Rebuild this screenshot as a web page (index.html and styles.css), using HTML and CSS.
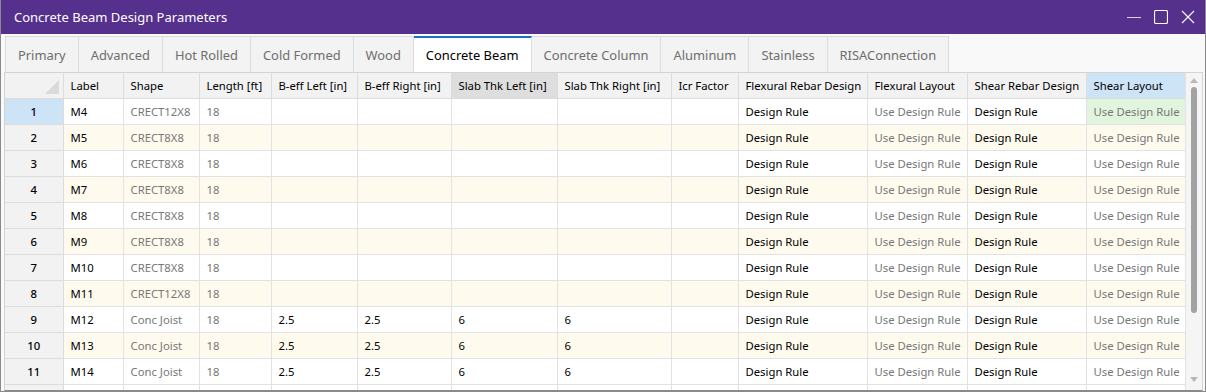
FILE: index.html
```html
<!DOCTYPE html>
<html lang="en">
<head>
    <meta charset="UTF-8">
    <title>Concrete Beam Design Parameters</title>
    <link rel="stylesheet" href="styles.css">
</head>
<body>
    <div class="window">
        <div class="titlebar">
            <span class="title">Concrete Beam Design Parameters</span>
            <div class="controls">
                <svg width="14" height="14" viewBox="0 0 14 14"><line x1="0" y1="7.5" x2="14" y2="7.5" stroke="#d9d2e6" stroke-width="1"/></svg>
                <svg width="14" height="14" viewBox="0 0 14 14"><rect x="0.5" y="0.5" width="13" height="13" rx="1.5" fill="none" stroke="#fff" stroke-width="1.2"/></svg>
                <svg width="14" height="14" viewBox="0 0 14 14"><path d="M1 1 L13 13 M13 1 L1 13" stroke="#fff" stroke-width="1.1"/></svg>
            </div>
        </div>

        <div class="tabs">
            <div class="tab">Primary</div>
            <div class="tab">Advanced</div>
            <div class="tab">Hot Rolled</div>
            <div class="tab">Cold Formed</div>
            <div class="tab">Wood</div>
            <div class="tab active">Concrete Beam</div>
            <div class="tab">Concrete Column</div>
            <div class="tab">Aluminum</div>
            <div class="tab">Stainless</div>
            <div class="tab">RISAConnection</div>
        </div>

        <div class="grid-area">
            <div class="grid-scroll">
                <table class="grid">
                    <colgroup>
                        <col style="width:58px"><col style="width:60px"><col style="width:76px"><col style="width:72px">
                        <col style="width:86px"><col style="width:94px"><col style="width:106px"><col style="width:114px">
                        <col style="width:67px"><col style="width:129px"><col style="width:100px"><col style="width:119px">
                        <col style="width:101px">
                    </colgroup>
                    <thead>
                        <tr>
                            <th class="corner"><span class="corner-mark"></span></th>
                            <th>Label</th>
                            <th>Shape</th>
                            <th>Length [ft]</th>
                            <th>B-eff Left [in]</th>
                            <th>B-eff Right [in]</th>
                            <th class="sorted">Slab Thk Left [in]</th>
                            <th>Slab Thk Right [in]</th>
                            <th>Icr Factor</th>
                            <th>Flexural Rebar Design</th>
                            <th>Flexural Layout</th>
                            <th>Shear Rebar Design</th>
                            <th class="current">Shear Layout</th>
                        </tr>
                    </thead>
                    <tbody id="rows"></tbody>
                </table>
            </div>
            <div class="scrollbar">
                <span class="arrow up"></span>
                <span class="thumb"></span>
                <span class="arrow down"></span>
            </div>
        </div>
    </div>

    <script>
        // member rows: label, shape, b-eff left, b-eff right, slab left, slab right
        const members = [
            ['M4', 'CRECT12X8', '', '', '', ''],
            ['M5', 'CRECT8X8', '', '', '', ''],
            ['M6', 'CRECT8X8', '', '', '', ''],
            ['M7', 'CRECT8X8', '', '', '', ''],
            ['M8', 'CRECT8X8', '', '', '', ''],
            ['M9', 'CRECT8X8', '', '', '', ''],
            ['M10', 'CRECT8X8', '', '', '', ''],
            ['M11', 'CRECT12X8', '', '', '', ''],
            ['M12', 'Conc Joist', '2.5', '2.5', '6', '6'],
            ['M13', 'Conc Joist', '2.5', '2.5', '6', '6'],
            ['M14', 'Conc Joist', '2.5', '2.5', '6', '6']
        ];

        const body = document.getElementById('rows');
        members.forEach((m, i) => {
            const tr = document.createElement('tr');
            if (i % 2 === 1) tr.className = 'alt';
            if (i === 0) tr.classList.add('selected');
            tr.innerHTML =
                '<td class="num">' + (i + 1) + '</td>' +
                '<td>' + m[0] + '</td>' +
                '<td class="dim">' + m[1] + '</td>' +
                '<td class="dim">18</td>' +
                '<td>' + m[2] + '</td>' +
                '<td>' + m[3] + '</td>' +
                '<td>' + m[4] + '</td>' +
                '<td>' + m[5] + '</td>' +
                '<td></td>' +
                '<td>Design Rule</td>' +
                '<td class="dim">Use Design Rule</td>' +
                '<td>Design Rule</td>' +
                '<td class="dim last">Use Design Rule</td>';
            body.appendChild(tr);
        });

        // partly visible row below the fold: only its grid lines show
        const tail = document.createElement('tr');
        tail.className = 'alt tail';
        tail.innerHTML = '<td class="num"></td>' + '<td></td>'.repeat(11) + '<td class="last"></td>';
        body.appendChild(tail);
    </script>
</body>
</html>
```

FILE: styles.css
```css
* {
    box-sizing: border-box;
}

body {
    margin: 0;
    font-family: 'Noto Sans', 'Open Sans', sans-serif;
    background: #ffffff;
}

.window {
    width: 1206px;
    height: 392px;
    border: 1px solid #8a8a8a;
    border-top: none;
    background: #f9f9f9;
    display: flex;
    flex-direction: column;
    overflow: hidden;
}

/* Title bar */
.titlebar {
    height: 34px;
    flex: none;
    background: #55308d;
    color: #fff;
    display: flex;
    align-items: center;
    justify-content: space-between;
    padding: 0 10px 0 13px;
}

.title {
    font-size: 13px;
}

.controls {
    display: flex;
    gap: 13px;
    align-items: center;
}

.controls svg {
    display: block;
}

/* Tabs */
.tabs {
    display: flex;
    height: 36px;
    flex: none;
    margin-top: 2px;
    padding-left: 4px;
}

.tab {
    font-size: 12.9px;
    color: #6e6e6e;
    background: #f3f3f3;
    border: 1px solid #dcdcdc;
    border-left: none;
    border-bottom: none;
    padding: 0 12px;
    display: flex;
    align-items: center;
}

.tab:first-child {
    border-left: 1px solid #dcdcdc;
}

.tab.active {
    background: #fff;
    color: #000;
    border-top: 2px solid #1c73c6;
}

/* Grid */
.grid-area {
    flex: 1;
    display: flex;
    margin-left: 3px;
    margin-right: 2px;
    border: 1px solid #d4d4d4;
    border-bottom: 1px solid #8a8a8a;
    overflow: hidden;
    background: #fff;
}

.grid-scroll {
    width: 1182px;
    overflow: hidden;
}

.grid {
    border-collapse: collapse;
    table-layout: fixed;
    width: 1182px;
    font-size: 11.3px;
}

.grid th,
.grid td {
    height: 26px;
    padding: 0 7px;
    border: 1px solid #e2e2e2;
    text-align: left;
    white-space: nowrap;
    overflow: hidden;
    color: #000;
}

.grid th {
    height: 25px;
    font-weight: normal;
    background: #f2f2f2;
    border-color: #dcdcdc;
    border-top: none;
}

.grid th.sorted {
    background: #dedede;
}

.grid th.current {
    background: #cde3f6;
}

.grid th.corner {
    position: relative;
    border-left: none;
}

.corner-mark {
    position: absolute;
    right: 4px;
    bottom: 4px;
    width: 0;
    height: 0;
    border-left: 14px solid transparent;
    border-bottom: 14px solid #dadada;
}

.grid td:first-child {
    border-left: none;
}

.grid tbody tr.alt td {
    background: #fefbee;
}

.grid td.num {
    background: #f2f2f2;
    text-align: center;
    font-weight: 500;
    border-color: #dcdcdc;
}

.grid tbody tr.alt td.num {
    background: #f2f2f2;
}

.grid tr.selected td.num {
    background: #cde3f6;
}

.grid tr.selected td.last {
    background: #e1f4dd;
}

.grid tbody tr.tail td {
    background: #fff;
}

.grid tbody tr.tail td.num {
    background: #f2f2f2;
}

.grid td.dim {
    color: #777;
}

.grid td.last {
    border-right: none;
}

/* Scrollbar */
.scrollbar {
    width: 17px;
    flex: none;
    background: #f5f5f5;
    border-left: 1px solid #e2e2e2;
    position: relative;
}

.thumb {
    position: absolute;
    left: 5px;
    top: 14px;
    width: 6px;
    height: 226px;
    border-radius: 3px;
    background: #a2a2a2;
}

.arrow {
    position: absolute;
    left: 4px;
    width: 0;
    height: 0;
    border-left: 4px solid transparent;
    border-right: 4px solid transparent;
}

.arrow.up {
    top: 5px;
    border-bottom: 5px solid #b8b8b8;
}

.arrow.down {
    bottom: 8px;
    border-top: 5px solid #b8b8b8;
}
```
